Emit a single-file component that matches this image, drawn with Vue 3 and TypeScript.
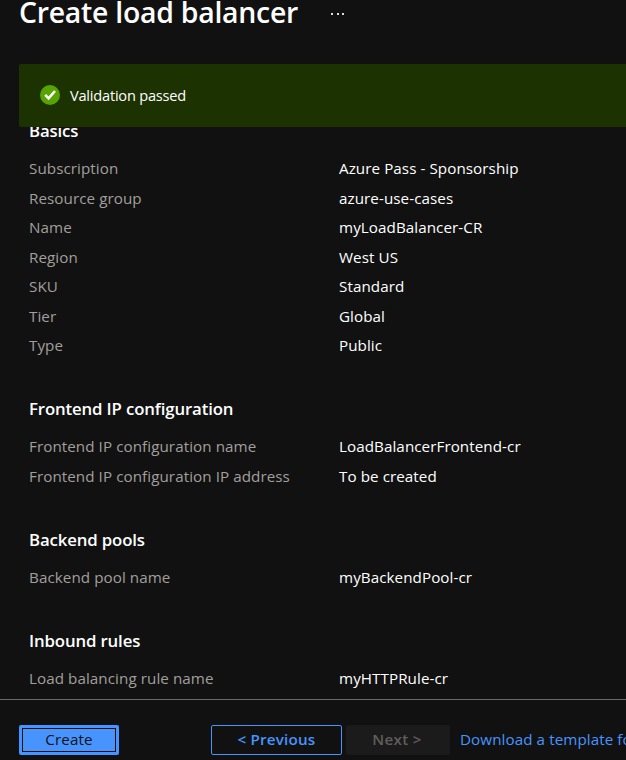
<script setup lang="ts">
interface Row {
  label: string
  value: string
}

interface Section {
  title: string
  rows: Row[]
}

const sections: Section[] = [
  {
    title: 'Basics',
    rows: [
      { label: 'Subscription', value: 'Azure Pass - Sponsorship' },
      { label: 'Resource group', value: 'azure-use-cases' },
      { label: 'Name', value: 'myLoadBalancer-CR' },
      { label: 'Region', value: 'West US' },
      { label: 'SKU', value: 'Standard' },
      { label: 'Tier', value: 'Global' },
      { label: 'Type', value: 'Public' },
    ],
  },
  {
    title: 'Frontend IP configuration',
    rows: [
      { label: 'Frontend IP configuration name', value: 'LoadBalancerFrontend-cr' },
      { label: 'Frontend IP configuration IP address', value: 'To be created' },
    ],
  },
  {
    title: 'Backend pools',
    rows: [{ label: 'Backend pool name', value: 'myBackendPool-cr' }],
  },
  {
    title: 'Inbound rules',
    rows: [{ label: 'Load balancing rule name', value: 'myHTTPRule-cr' }],
  },
]
</script>

<template>
  <div class="page">
    <header class="header">
      <h1 class="title">Create load balancer</h1>
      <svg class="more" width="16" height="4" viewBox="0 0 16 4" aria-hidden="true">
        <rect x="1" y="1" width="2" height="2" />
        <rect x="7" y="1" width="2" height="2" />
        <rect x="12" y="1" width="2" height="2" />
      </svg>
    </header>

    <div class="banner">
      <svg class="check" width="20" height="20" viewBox="0 0 20 20" aria-hidden="true">
        <circle cx="10" cy="10" r="10" fill="#57a300" />
        <path d="M5.2 9.9 8.6 13.4 15 6" fill="none" stroke="#fff" stroke-width="2.6" />
      </svg>
      <span class="banner-text">Validation passed</span>
    </div>

    <main class="content">
      <section v-for="section in sections" :key="section.title" class="section">
        <h2 class="section-title">{{ section.title }}</h2>
        <dl class="rows">
          <div v-for="row in section.rows" :key="row.label" class="row">
            <dt class="label">{{ row.label }}</dt>
            <dd class="value">{{ row.value }}</dd>
          </div>
        </dl>
      </section>
    </main>

    <footer class="footer">
      <button class="btn primary"><span class="ring">Create</span></button>
      <button class="btn outline">&lt; Previous</button>
      <button class="btn disabled" disabled>Next &gt;</button>
      <a class="link">Download a template for automation</a>
    </footer>
  </div>
</template>

<style>
body {
  margin: 0;
  background: #111;
}
</style>

<style scoped>
.page {
  display: flex;
  flex-direction: column;
  width: 100%;
  height: 760px;
  overflow: hidden;
  background: #111;
  color: #fff;
  font-family: 'Open Sans', 'Noto Sans', sans-serif;
  font-size: 15.2px;
}
.header {
  display: flex;
  flex: none;
  height: 64px;
  padding-left: 19px;
}
.title {
  margin: -8px 0 0;
  font-size: 28.4px;
  font-weight: 600;
  line-height: 40px;
  letter-spacing: -0.25px;
  width: 311px;
  white-space: nowrap;
}
.more {
  margin-top: 12px;
  fill: #ddd;
}
.banner {
  display: flex;
  flex: none;
  align-items: center;
  z-index: 1;
  height: 63px;
  box-sizing: border-box;
  margin-left: 19px;
  padding: 0 0 1px 21px;
  gap: 10px;
  border-radius: 2px 0 0 2px;
  background: #1c3201;
  font-size: 14.6px;
  line-height: 20px;
  letter-spacing: -0.22px;
}
.content {
  flex: 1;
  min-height: 0;
  overflow: hidden;
  margin-top: -11px;
  padding-left: 29px;
}
.section {
  margin-bottom: 34.5px;
}
.section-title {
  margin: 0;
  padding-bottom: 7px;
  font-size: 16.8px;
  font-weight: 600;
  line-height: 30px;
  letter-spacing: -0.14px;
}
.rows {
  margin: 0;
}
.row {
  display: grid;
  grid-template-columns: 310px 1fr;
  height: 29.5px;
  line-height: 30px;
  letter-spacing: 0.07px;
  white-space: nowrap;
}
.label {
  color: #a19f9d;
}
.value {
  margin: 0;
}
.footer {
  display: flex;
  flex: none;
  align-items: flex-start;
  height: 61px;
  box-sizing: border-box;
  padding: 25px 0 0 19px;
  border-top: 1px solid #6a6a6a;
  white-space: nowrap;
}
.btn {
  flex: none;
  height: 30px;
  box-sizing: border-box;
  padding: 0 0 2px;
  border: 0;
  border-radius: 2px;
  font: inherit;
  line-height: 28px;
}
.primary {
  width: 100px;
  padding: 3px;
  margin-right: 92px;
  background: #4894fe;
  color: #111;
}
.ring {
  display: block;
  height: 24px;
  box-sizing: border-box;
  border: 1px solid #111;
  line-height: 20px;
  letter-spacing: 0.1px;
}
.outline {
  width: 131px;
  margin-right: 4px;
  border: 1px solid #4894fe;
  background: transparent;
  color: #4894fe;
  font-weight: 600;
  line-height: 26px;
  letter-spacing: 0.2px;
}
.disabled {
  width: 104px;
  margin-right: 10px;
  padding-right: 2px;
  background: #1b1b1b;
  color: #605e5c;
  font-weight: 600;
  letter-spacing: 0.3px;
}
.link {
  color: #4894fe;
  line-height: 29px;
  letter-spacing: 0.08px;
}
</style>
